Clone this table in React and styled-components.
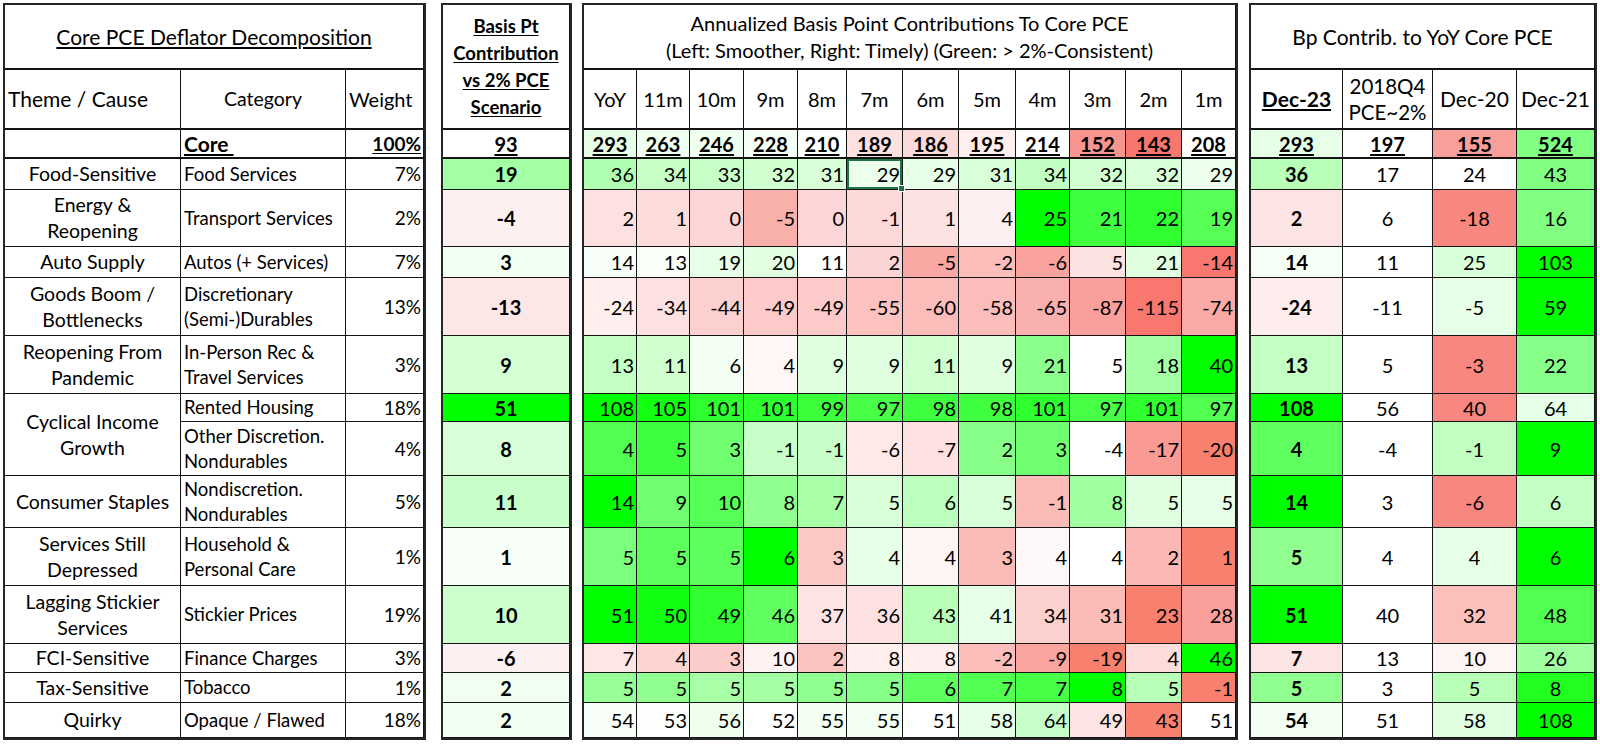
import React from 'react'
import styled, { createGlobalStyle } from 'styled-components'

const GlobalStyle = createGlobalStyle`
    html, body {
        margin: 0;
        padding: 0;
        background: #fff;
    }
    body {
        font-family: Lato, "Open Sans", "Liberation Sans", sans-serif;
        color: #000;
    }
`

const TITLE_H = 65
const HEAD_H = 60
const LINE = '#141414'

// core row + the 13 category rows
const ROW_H = [29, 31, 57, 31, 58, 58, 28, 54, 52, 58, 58, 29, 30, 35]

const rowsTemplate = `${TITLE_H}px ${HEAD_H}px ${ROW_H.map(h => `${h}px`).join(' ')}`

const Page = styled.div`
    display: flex;
    align-items: flex-start;
    padding: 3px 0 0 3px;
    width: 1600px;
    height: 748px;
    box-sizing: border-box;
    overflow: hidden;
`

const Panel = styled.div`
    display: grid;
    grid-template-columns: ${p => p.$cols};
    grid-template-rows: ${rowsTemplate};
    border: 2px solid #262626;
    margin-right: ${p => p.$gap || 0}px;
    background: #fff;
    flex: none;
`

const Cell = styled.div`
    position: relative;
    box-sizing: border-box;
    display: flex;
    align-items: center;
    justify-content: ${p => p.$align === 'left' ? 'flex-start' : p.$align === 'right' ? 'flex-end' : 'center'};
    text-align: ${p => p.$align || 'center'};
    padding: ${p => p.$align === 'left' ? '0 0 0 3px' : p.$align === 'right' ? '0 2px 0 0' : '0 2px'};
    border-right: 1px solid ${LINE};
    border-bottom: ${p => p.$thick ? 2 : 1}px solid ${LINE};
    background: ${p => p.$bg || '#fff'};
    font-size: ${p => p.$size || 20}px;
    line-height: ${p => p.$lh || 26}px;
    font-weight: ${p => p.$bold ? 700 : 400};
    text-decoration: ${p => p.$under ? 'underline' : 'none'};
    text-underline-offset: 2px;
    grid-column: ${p => p.$colSpan ? `span ${p.$colSpan}` : 'auto'};
    grid-row: ${p => p.$rowSpan ? `span ${p.$rowSpan}` : 'auto'};
    white-space: nowrap;

    ${p => p.$selected && `
        box-shadow: inset 0 0 0 2px #217346;
        &::after {
            content: '';
            position: absolute;
            right: -3px;
            bottom: -3px;
            width: 5px;
            height: 5px;
            background: #217346;
            border: 1px solid #fff;
            z-index: 2;
        }
    `}
`

const TitleCell = styled(Cell)`
    flex-direction: column;
    justify-content: center;
    align-items: center;
    white-space: normal;
`

const StackCell = styled(Cell)`
    flex-direction: column;
    align-items: flex-start;
    justify-content: center;
`

const Line = styled.span`
    display: block;
`

const core = {
    bp: [93, '#ffffff'],
    ann: [
        [293, '#e6ffe6'], [263, '#effff0'], [246, '#effff0'], [228, '#f5fff5'],
        [210, '#ffffff'], [189, '#fde0e0'], [186, '#fcdada'], [195, '#feeeee'],
        [214, '#ffffff'], [152, '#f8958f'], [143, '#f7776f'], [208, '#fffdfd']
    ],
    yoy: [[293, '#e6ffe6'], [197, '#ffffff'], [155, '#f99f9a'], [524, '#80ff80']]
}

const rows = [
    {
        theme: ['Food-Sensitive'], cat: ['Food Services'], w: '7%',
        bp: [19, '#a3ffa3'],
        ann: [
            [36, '#b0ffb0'], [34, '#c6ffc6'], [33, '#c8ffc8'], [32, '#d0ffd0'],
            [31, '#d8ffd8'], [29, '#ecffec', true], [29, '#e6ffe6'], [31, '#d8ffd8'],
            [34, '#c2ffc2'], [32, '#d2ffd2'], [32, '#d8ffd8'], [29, '#ecffec']
        ],
        yoy: [[36, '#b8ffb8'], [17, '#ffffff'], [24, '#ffffff'], [43, '#80ff80']]
    },
    {
        theme: ['Energy &', 'Reopening'], cat: ['Transport Services'], w: '2%',
        bp: [-4, '#fdf0f0'],
        ann: [
            [2, '#fde0e0'], [1, '#fddcdc'], [0, '#fcd6d6'], [-5, '#f9b0aa'],
            [0, '#fcd6d6'], [-1, '#fdd8d8'], [1, '#fde2e2'], [4, '#fef0f0'],
            [25, '#00ff00'], [21, '#40ff40'], [22, '#30ff30'], [19, '#55ff55']
        ],
        yoy: [[2, '#fde4e4'], [6, '#ffffff'], [-18, '#f8877f'], [16, '#80ff80']]
    },
    {
        theme: ['Auto Supply'], cat: ['Autos (+ Services)'], w: '7%',
        bp: [3, '#f0fff0'],
        ann: [
            [14, '#f8fff8'], [13, '#fafffa'], [19, '#e6ffe6'], [20, '#e2ffe2'],
            [11, '#ffffff'], [2, '#fdd4d4'], [-5, '#f9a8a4'], [-2, '#fbbdba'],
            [-6, '#f9a29e'], [5, '#fde2e2'], [21, '#e0ffe0'], [-14, '#f8776f']
        ],
        yoy: [[14, '#f6fff6'], [11, '#ffffff'], [25, '#d8ffd8'], [103, '#00ff00']]
    },
    {
        theme: ['Goods Boom /', 'Bottlenecks'], cat: ['Discretionary', '(Semi-)Durables'], w: '13%',
        bp: [-13, '#fce6e6'],
        ann: [
            [-24, '#feeeee'], [-34, '#fde0e0'], [-44, '#fcd0ce'], [-49, '#fccac8'],
            [-49, '#fccac8'], [-55, '#fbc2c0'], [-60, '#fbbcba'], [-58, '#fbbdbb'],
            [-65, '#fab0ae'], [-87, '#f9a09c'], [-115, '#f8786f'], [-74, '#faaaa6']
        ],
        yoy: [[-24, '#fdeded'], [-11, '#ffffff'], [-5, '#e6ffe6'], [59, '#00ff00']]
    },
    {
        theme: ['Reopening From', 'Pandemic'], cat: ['In-Person Rec &', 'Travel Services'], w: '3%',
        bp: [9, '#d5ffd5'],
        ann: [
            [13, '#c4ffc4'], [11, '#d0ffd0'], [6, '#f2fff2'], [4, '#fff6f6'],
            [9, '#e0ffe0'], [9, '#e0ffe0'], [11, '#d0ffd0'], [9, '#e0ffe0'],
            [21, '#8cff8c'], [5, '#ffffff'], [18, '#a4ffa4'], [40, '#00ff00']
        ],
        yoy: [[13, '#c4ffc4'], [5, '#ffffff'], [-3, '#f8877f'], [22, '#88ff88']]
    },
    {
        theme: ['Cyclical Income', 'Growth'], span: 2, cat: ['Rented Housing'], w: '18%',
        bp: [51, '#00ff00'],
        ann: [
            [108, '#00ff00'], [105, '#12ff12'], [101, '#2eff2e'], [101, '#2eff2e'],
            [99, '#3cff3c'], [97, '#46ff46'], [98, '#40ff40'], [98, '#40ff40'],
            [101, '#2eff2e'], [97, '#46ff46'], [101, '#30ff30'], [97, '#50ff50']
        ],
        yoy: [[108, '#00ff00'], [56, '#ffffff'], [40, '#f8877f'], [64, '#e6ffe6']]
    },
    {
        cat: ['Other Discretion.', 'Nondurables'], w: '4%',
        bp: [8, '#d8ffd8'],
        ann: [
            [4, '#50ff50'], [5, '#40ff40'], [3, '#70ff70'], [-1, '#c8ffc8'],
            [-1, '#c8ffc8'], [-6, '#fee8e8'], [-7, '#fee0e0'], [2, '#88ff88'],
            [3, '#70ff70'], [-4, '#ffffff'], [-17, '#f99a95'], [-20, '#f8806f']
        ],
        yoy: [[4, '#60ff60'], [-4, '#ffffff'], [-1, '#c0ffc0'], [9, '#00ff00']]
    },
    {
        theme: ['Consumer Staples'], cat: ['Nondiscretion.', 'Nondurables'], w: '5%',
        bp: [11, '#c8ffc8'],
        ann: [
            [14, '#00ff00'], [9, '#70ff70'], [10, '#55ff55'], [8, '#90ff90'],
            [7, '#a8ffa8'], [5, '#d8ffd8'], [6, '#bcffbc'], [5, '#d8ffd8'],
            [-1, '#fbbcb8'], [8, '#a0ffa0'], [5, '#e0ffe0'], [5, '#e6ffe6']
        ],
        yoy: [[14, '#00ff00'], [3, '#ffffff'], [-6, '#f8877f'], [6, '#c4ffc4']]
    },
    {
        theme: ['Services Still', 'Depressed'], cat: ['Household &', 'Personal Care'], w: '1%',
        bp: [1, '#f8fff8'],
        ann: [
            [5, '#7cff7c'], [5, '#5cff5c'], [5, '#5cff5c'], [6, '#00ff00'],
            [3, '#fcc8c6'], [4, '#e8ffe8'], [4, '#fff4f4'], [3, '#fbbcb8'],
            [4, '#fff8f8'], [4, '#ffffff'], [2, '#fbb8b4'], [1, '#f8806f']
        ],
        yoy: [[5, '#90ff90'], [4, '#ffffff'], [4, '#e6ffe6'], [6, '#00ff00']]
    },
    {
        theme: ['Lagging Stickier', 'Services'], cat: ['Stickier Prices'], w: '19%',
        bp: [10, '#ccffcc'],
        ann: [
            [51, '#00ff00'], [50, '#10ff10'], [49, '#30ff30'], [46, '#60ff60'],
            [37, '#fde4e4'], [36, '#fde0e0'], [43, '#b8ffb8'], [41, '#e6ffe6'],
            [34, '#fcd0cc'], [31, '#fbbcb8'], [23, '#f8806f'], [28, '#f9a09c']
        ],
        yoy: [[51, '#00ff00'], [40, '#ffffff'], [32, '#fbc0bc'], [48, '#50ff50']]
    },
    {
        theme: ['FCI-Sensitive'], cat: ['Finance Charges'], w: '3%',
        bp: [-6, '#fdf0f0'],
        ann: [
            [7, '#fee6e6'], [4, '#fdd4d2'], [3, '#fcccca'], [10, '#fff2f2'],
            [2, '#fcc4c0'], [8, '#ffeeee'], [8, '#ffeeee'], [-2, '#fbbeba'],
            [-9, '#f9a49e'], [-19, '#f8806f'], [4, '#fddcda'], [46, '#00ff00']
        ],
        yoy: [[7, '#fde4e4'], [13, '#ffffff'], [10, '#fff4f4'], [26, '#a0ffa0']]
    },
    {
        theme: ['Tax-Sensitive'], cat: ['Tobacco'], w: '1%',
        bp: [2, '#f0fff0'],
        ann: [
            [5, '#98ff98'], [5, '#90ff90'], [5, '#a8ffa8'], [5, '#a4ffa4'],
            [5, '#90ff90'], [5, '#88ff88'], [6, '#60ff60'], [7, '#50ff50'],
            [7, '#48ff48'], [8, '#00ff00'], [5, '#b8ffb8'], [-1, '#f8806f']
        ],
        yoy: [[5, '#90ff90'], [3, '#ffffff'], [5, '#b8ffb8'], [8, '#20ff20']]
    },
    {
        theme: ['Quirky'], cat: ['Opaque / Flawed'], w: '18%',
        bp: [2, '#f0fff0'],
        ann: [
            [54, '#f8fff8'], [53, '#fcfffc'], [56, '#eeffee'], [52, '#ffffff'],
            [55, '#f2fff2'], [55, '#f2fff2'], [51, '#ffffff'], [58, '#e6ffe6'],
            [64, '#c8ffc8'], [49, '#fde4e4'], [43, '#f8806f'], [51, '#ffffff']
        ],
        yoy: [[54, '#f4fff4'], [51, '#ffffff'], [58, '#e0ffe0'], [108, '#00ff00']]
    }
]

const annHeads = ['YoY', '11m', '10m', '9m', '8m', '7m', '6m', '5m', '4m', '3m', '2m', '1m']
const annCols = [53, 53, 54, 54, 49, 56, 56, 57, 54, 56, 56, 54].map(w => `${w}px`).join(' ')

const lines = arr => arr.map((t, i) => <Line key={i}>{t}</Line>)

function Decomposition() {
    return (
        <Panel $cols="176px 165px 78px" $gap={15}>
            <TitleCell $colSpan={3} $size={21} $under $thick>
                Core PCE Deflator Decomposition
            </TitleCell>
            <Cell $align="left" $size={21} $thick>Theme / Cause</Cell>
            <Cell $size={19.5} $thick>Category</Cell>
            <Cell $align="left" $size={20} $thick>Weight</Cell>

            <Cell $thick />
            <Cell $align="left" $size={21} $bold $under $thick>Core&nbsp;</Cell>
            <Cell $align="right" $size={19} $bold $under $thick>100%</Cell>

            {rows.map((r, i) => (
                <React.Fragment key={i}>
                    {r.theme && (
                        <TitleCell $rowSpan={r.span} $size={19.5}>{lines(r.theme)}</TitleCell>
                    )}
                    <StackCell $align="left" $size={18.5} $lh={25}>{lines(r.cat)}</StackCell>
                    <Cell $align="right" $size={19}>{r.w}</Cell>
                </React.Fragment>
            ))}
        </Panel>
    )
}

function Scenario() {
    return (
        <Panel $cols="127px" $gap={10}>
            <TitleCell $rowSpan={2} $size={18.5} $lh={27} $bold $under $thick>
                {lines(['Basis Pt', 'Contribution', 'vs 2% PCE', 'Scenario'])}
            </TitleCell>
            <Cell $bold $under $thick>{core.bp[0]}</Cell>
            {rows.map((r, i) => (
                <Cell key={i} $bold $bg={r.bp[1]}>{r.bp[0]}</Cell>
            ))}
        </Panel>
    )
}

function Annualized() {
    return (
        <Panel $cols={annCols} $gap={11}>
            <TitleCell $colSpan={12} $size={20} $lh={26.5} $thick>
                <Line>Annualized Basis Point Contributions To Core PCE</Line>
                <Line>(Left: Smoother, Right: Timely) (Green: &gt; 2%-Consistent)</Line>
            </TitleCell>
            {annHeads.map(h => (
                <Cell key={h} $size={20} $thick>{h}</Cell>
            ))}
            {core.ann.map(([v, bg], j) => (
                <Cell key={`c${j}`} $bg={bg} $bold $under $thick>{v}</Cell>
            ))}
            {rows.map((r, i) => r.ann.map(([v, bg, sel], j) => (
                <Cell key={`${i}-${j}`} $align="right" $bg={bg} $selected={sel}>{v}</Cell>
            )))}
        </Panel>
    )
}

function YearOnYear() {
    return (
        <Panel $cols="92px 90px 84px 78px">
            <TitleCell $colSpan={4} $size={21} $thick>Bp Contrib. to YoY Core PCE</TitleCell>
            <Cell $size={21} $bold $under $thick>Dec-23</Cell>
            <TitleCell $size={20.5} $lh={26} $thick>{lines(['2018Q4', 'PCE~2%'])}</TitleCell>
            <Cell $size={21} $thick>Dec-20</Cell>
            <Cell $size={21} $thick>Dec-21</Cell>
            {core.yoy.map(([v, bg], j) => (
                <Cell key={`c${j}`} $bg={bg} $bold $under $thick>{v}</Cell>
            ))}
            {rows.map((r, i) => r.yoy.map(([v, bg], j) => (
                <Cell key={`${i}-${j}`} $bg={bg} $bold={j === 0}>{v}</Cell>
            )))}
        </Panel>
    )
}

export default function App() {
    return (
        <>
            <GlobalStyle />
            <Page>
                <Decomposition />
                <Scenario />
                <Annualized />
                <YearOnYear />
            </Page>
        </>
    )
}
